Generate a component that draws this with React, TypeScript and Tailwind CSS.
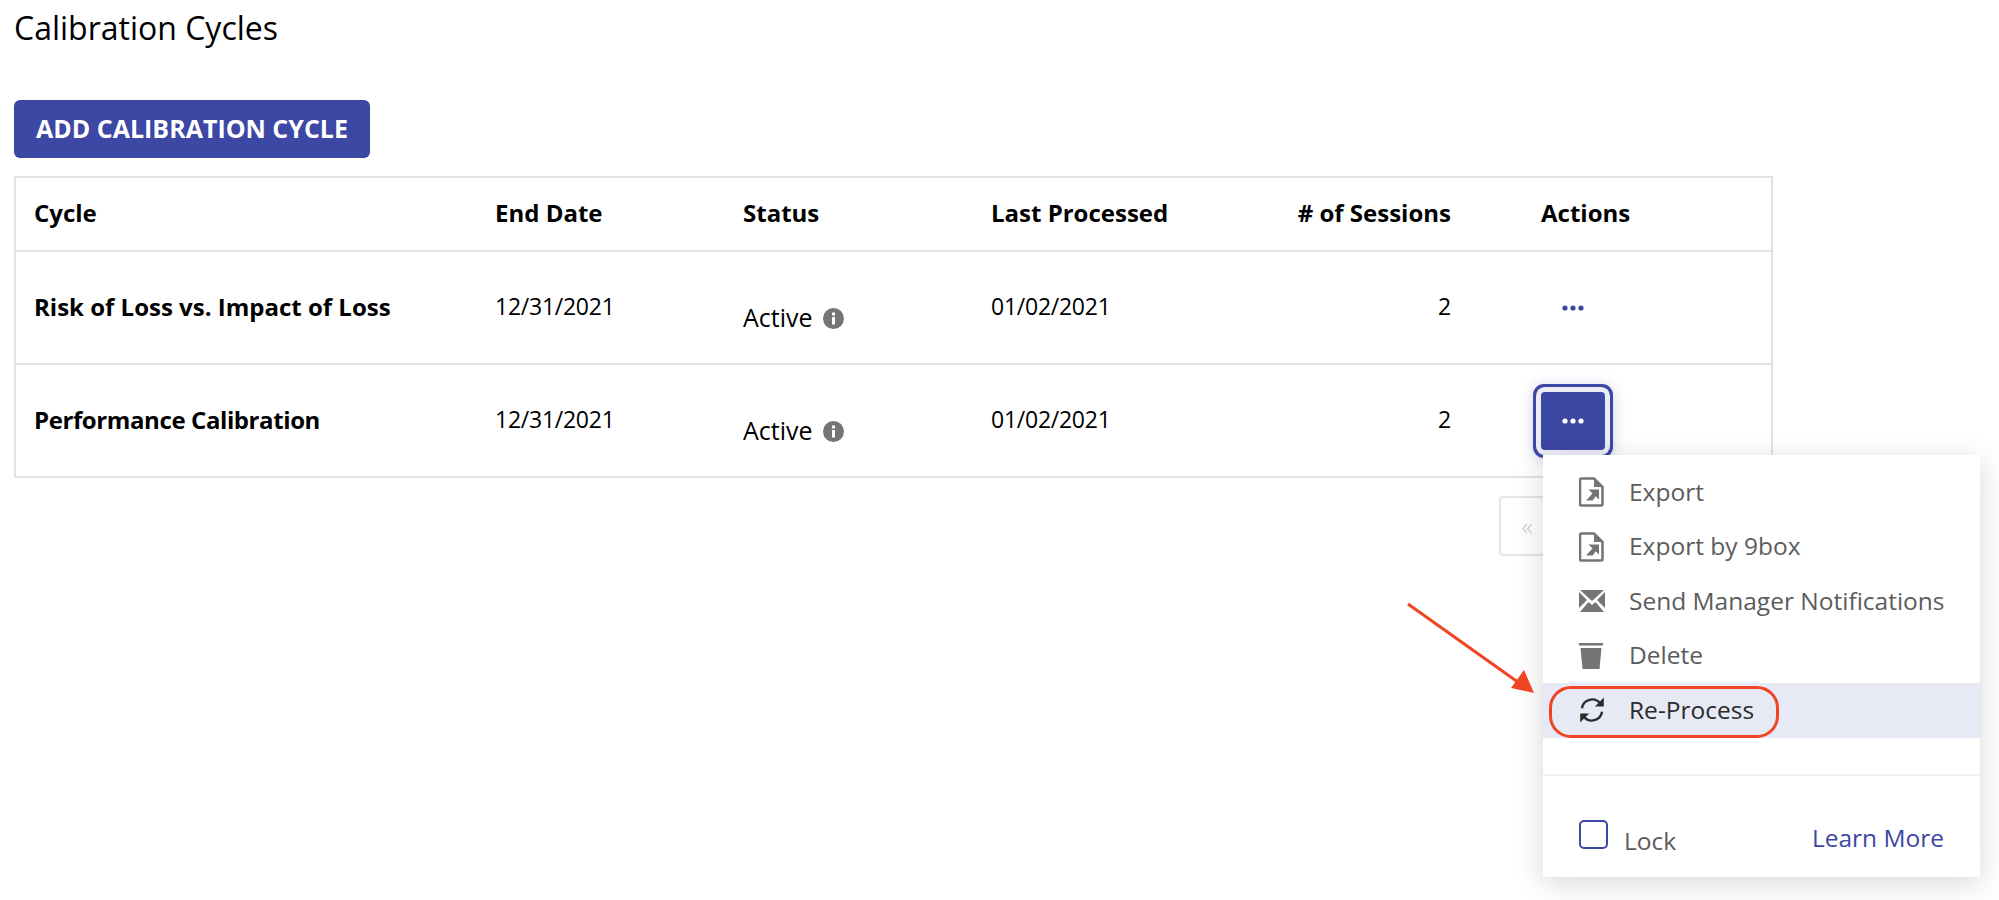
const blue = "#3d47a4";
const cols = "grid grid-cols-[461px_248px_248px_230px_230px_90px_1fr] items-center";

function FileIcon() {
  return (
    <svg width="25" height="30" viewBox="0 0 25 30" fill="none">
      <path d="M2.500 1.500H15l8.500 8.500v17a1.500 1.500 0 0 1-1.500 1.500H2.500A1.500 1.500 0 0 1 1 27V3a1.500 1.500 0 0 1 1.500-1.500z" stroke="#757575" strokeWidth="2.600" />
      <path d="M15 1.500V10h8.500z" fill="#757575" />
      <path d="M9.500 12.500H20v10l-3.300-3.300-3 4.300H7l6.500-7z" fill="#757575" />
    </svg>
  );
}

function MailIcon() {
  return (
    <svg width="26" height="22" viewBox="0 0 26 22" fill="#757575">
      <path d="M1 0h24L13 11z" />
      <path d="M0 2l8 8-8 8z" />
      <path d="M26 2l-8 8 8 8z" />
      <path d="M1 22l8.500-10 3.500 3 3.500-3L25 22z" />
    </svg>
  );
}

function TrashIcon() {
  return (
    <svg width="24" height="26" viewBox="0 0 24 26" fill="#757575">
      <rect x="0" y="0" width="24" height="2.500" />
      <path d="M1.500 5h21l-2 21h-17z" />
    </svg>
  );
}

function RefreshIcon() {
  return (
    <svg width="26" height="26" viewBox="1.500 1 21 22" fill="none" stroke="#2b2b2b" strokeWidth="2">
      <path d="M3.500 10.500A8.700 8.700 0 0 1 19 6.500" />
      <path d="M20.500 13.500A8.700 8.700 0 0 1 5 17.500" />
      <path d="M22 1.500v7.500h-7.500z" fill="#2b2b2b" stroke="none" />
      <path d="M2 22.500V15h7.500z" fill="#2b2b2b" stroke="none" />
    </svg>
  );
}

function InfoIcon() {
  return (
    <svg width="21" height="21" viewBox="0 0 21 21" className="ml-[10px] mt-[1px]">
      <circle cx="10.500" cy="10.500" r="10.500" fill="#757575" />
      <rect x="9" y="9" width="3" height="7.500" fill="#fff" />
      <rect x="9" y="4.500" width="3" height="3" fill="#fff" />
    </svg>
  );
}

function Dots({ color }: { color: string }) {
  return (
    <svg width="22" height="6" viewBox="0 0 22 6" fill={color}>
      <circle cx="3" cy="3" r="2.600" />
      <circle cx="11" cy="3" r="2.600" />
      <circle cx="19" cy="3" r="2.600" />
    </svg>
  );
}

function Row({ name, open }: { name: string; open: boolean }) {
  return (
    <div className={`${cols} h-[113px] border-t-2 border-[#e1e1e8] pl-[18px] text-[23px] tracking-[-0.25px] text-black`}>
      <div className={`pb-[2px] text-[24px] font-bold ${open ? "tracking-[-0.4px]" : "tracking-normal"}`}>{name}</div>
      <div className="pb-[2px]">12/31/2021</div>
      <div className="flex items-center pt-[20px] text-[25px] tracking-normal">
        Active
        <InfoIcon />
      </div>
      <div className="pb-[2px]">01/02/2021</div>
      <div className="pb-[2px] text-right">2</div>
      <div />
      <div
        className={`flex h-[58px] w-[64px] items-center justify-center rounded-[4px] ${
          open ? "bg-[#3d47a4] shadow-[0_0_0_5px_#ecedf6,0_0_0_8px_#3d47a4,0_2px_14px_8px_rgba(61,71,164,0.25)]" : ""
        }`}
      >
        <Dots color={open ? "#ffffff" : blue} />
      </div>
    </div>
  );
}

function Item({ icon, label, active }: { icon: React.ReactNode; label: string; active?: boolean }) {
  return (
    <div className={`flex items-center h-[54.500px] pl-[36px] ${active ? "bg-[#e7e9f5] text-[#2b2b2b]" : "text-[#5c5c5c]"}`}>
      <div className="w-[50px] flex justify-start">{icon}</div>
      <span className="whitespace-nowrap">{label}</span>
    </div>
  );
}

export default function App() {
  return (
    <div className="relative h-[900px] w-[1999px] overflow-hidden bg-white font-['Open_Sans','Liberation_Sans',sans-serif]">
      <div className="pl-[14px]">
        <h1 className="pt-[8px] text-[32px] leading-[40px] text-black">Calibration Cycles</h1>
        <button className="mt-[52px] flex h-[58px] w-[356px] items-center justify-center rounded-[6px] bg-[#3d47a4] text-[25px] font-bold text-white">
          <span>ADD CALIBRATION CYCLE</span>
        </button>
        <div className="mt-[18px] w-[1759px] border-2 border-[#e1e1e8]">
          <div className={`${cols} h-[72px] pl-[18px] text-[24px] font-bold text-black`}>
            <div className="pb-[2px]">Cycle</div>
            <div className="pb-[2px]">End Date</div>
            <div className="pb-[2px]">Status</div>
            <div className="whitespace-nowrap pb-[2px]">Last Processed</div>
            <div className="whitespace-nowrap pb-[2px] text-right"># of Sessions</div>
            <div />
            <div className="pb-[2px]">Actions</div>
          </div>
          <Row name="Risk of Loss vs. Impact of Loss" open={false} />
          <Row name="Performance Calibration" open={true} />
        </div>
      </div>

      {/* pagination, mostly hidden by the menu */}
      <div className="absolute left-[1499px] top-[496px] flex h-[60px] w-[80px] items-center rounded-[4px] border-2 border-[#e4e4ea] pl-[20px] text-[24px] text-[#d5d7e6]">
        «
      </div>

      {/* menu */}
      <div className="absolute left-[1543px] top-[455px] flex h-[422px] w-[437px] flex-col bg-white pt-[10px] text-[24.500px] shadow-[0_6px_28px_rgba(0,0,0,0.16)]">
        <Item icon={<FileIcon />} label="Export" />
        <Item icon={<FileIcon />} label="Export by 9box" />
        <Item icon={<MailIcon />} label="Send Manager Notifications" />
        <Item icon={<TrashIcon />} label="Delete" />
        <Item icon={<RefreshIcon />} label="Re-Process" active />
        <div className="mt-[36px] border-t-2 border-[#f1f1f3]" />
        <div className="flex items-start justify-between px-[36px] pt-[44px]">
          <div className="flex items-start">
            <div className="h-[29px] w-[29px] rounded-[5px] border-2 border-[#3d47a4]" />
            <span className="ml-[16px] mt-[3px] text-[#5c5c5c]">Lock</span>
          </div>
          <a className="text-[#3d47a4]">Learn More</a>
        </div>
      </div>

      {/* annotation */}
      <svg className="absolute left-[1400px] top-[595px]" width="150" height="110" viewBox="0 0 150 110" fill="none">
        <path d="M8 9L122 90" stroke="#f04423" strokeWidth="3" />
        <path d="M134 98L111 93L124 75z" fill="#f04423" />
      </svg>
      <div className="absolute left-[1549px] top-[686px] h-[52px] w-[230px] rounded-[22px] border-[3px] border-[#f04423]" />
    </div>
  );
}
